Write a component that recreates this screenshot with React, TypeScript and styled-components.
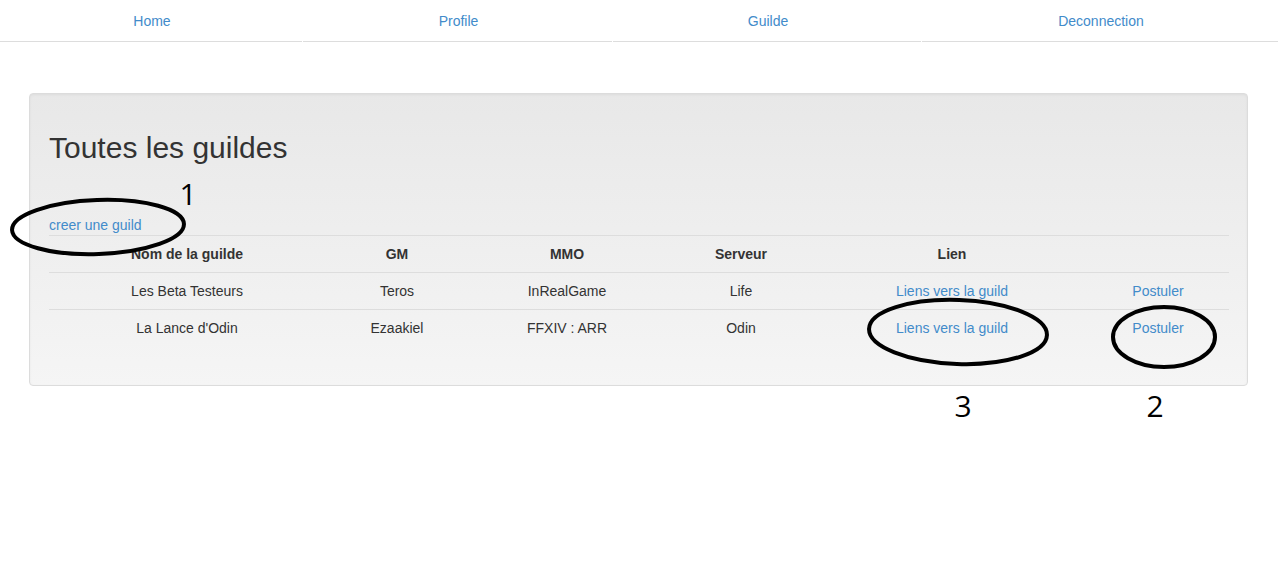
import * as React from "react";
import styled, { createGlobalStyle } from "styled-components";

const GlobalStyle = createGlobalStyle`
	html, body {
		margin: 0;
		padding: 0;
		background: #fff;
	}
	body {
		font-family: "Liberation Sans", Arial, sans-serif;
		font-size: 14px;
		line-height: 20px;
		color: #333;
	}
`;

const Page = styled.div`
	position: relative;
	width: 1280px;
	height: 578px;
	overflow: hidden;
`;

const Nav = styled.ul`
	display: grid;
	grid-template-columns: 303fr 310fr 309fr 356fr;
	margin: 0 2px 0 0;
	padding: 0;
	list-style: none;
`;

const NavItem = styled.li`
	margin-right: 1px;
	border-bottom: 1px solid #ddd;
	text-align: center;

	&:last-child {
		margin-right: 0;
	}
`;

const NavLink = styled.a`
	display: block;
	padding: 11px 14px 10px 16px;
	color: #428bca;
	text-decoration: none;
`;

const Well = styled.div`
	margin: 51px 32px 20px 29px;
	padding: 19px;
	min-height: 20px;
	border: 1px solid #dcdcdc;
	border-radius: 4px;
	background: linear-gradient(to bottom, #e8e8e8 0%, #f5f5f5 100%);
	box-shadow: inset 0 1px 3px rgba(0, 0, 0, 0.05), 0 1px 0 rgba(255, 255, 255, 0.1);
`;

const Title = styled.h2`
	margin: 18px 0 10px;
	font-size: 30px;
	font-weight: 500;
	line-height: 33px;
	color: #333;
`;

const CreateLink = styled.a`
	display: block;
	margin-top: 51px;
	color: #428bca;
	text-decoration: none;
`;

const Table = styled.table`
	width: 100%;
	border-collapse: collapse;
	border-spacing: 0;
	margin-bottom: 20px;
	table-layout: fixed;

	th, td {
		padding: 8px;
		border-top: 1px solid #ddd;
		text-align: center;
		vertical-align: top;
		line-height: 20px;
	}

	th {
		font-weight: bold;
	}
`;

const CellLink = styled.a`
	color: #428bca;
	text-decoration: none;
`;

const Marks = styled.svg`
	position: absolute;
	left: 0;
	top: 0;
	pointer-events: none;
`;

const MarkNumber = styled.text`
	font-family: "Open Sans", "Noto Sans", sans-serif;
	font-size: 30px;
	fill: #000;
`;

const columns = [276, 144, 196, 152, 270, 142];

const guilds = [
	{ name: "Les Beta Testeurs", gm: "Teros", mmo: "InRealGame", server: "Life" },
	{ name: "La Lance d'Odin", gm: "Ezaakiel", mmo: "FFXIV : ARR", server: "Odin" },
];

const App = () => {
	return (
		<>
			<GlobalStyle />
			<Page>
				<Nav>
					<NavItem><NavLink href="#">Home</NavLink></NavItem>
					<NavItem><NavLink href="#">Profile</NavLink></NavItem>
					<NavItem><NavLink href="#">Guilde</NavLink></NavItem>
					<NavItem><NavLink href="#">Deconnection</NavLink></NavItem>
				</Nav>

				<Well>
					<Title>Toutes les guildes</Title>
					<CreateLink href="#">creer une guild</CreateLink>
					<Table>
						<colgroup>
							{columns.map((w, i) => (
								<col key={i} style={{ width: w }} />
							))}
						</colgroup>
						<tbody>
							<tr>
								<th>Nom de la guilde</th>
								<th>GM</th>
								<th>MMO</th>
								<th>Serveur</th>
								<th>Lien</th>
								<th></th>
							</tr>
							{guilds.map((g) => (
								<tr key={g.name}>
									<td>{g.name}</td>
									<td>{g.gm}</td>
									<td>{g.mmo}</td>
									<td>{g.server}</td>
									<td><CellLink href="#">Liens vers la guild</CellLink></td>
									<td><CellLink href="#">Postuler</CellLink></td>
								</tr>
							))}
						</tbody>
					</Table>
				</Well>

				{/* hand-drawn annotations over the page */}
				<Marks width="1280" height="578" viewBox="0 0 1280 578">
					<g fill="none" stroke="#000" strokeWidth="4">
						<ellipse cx="98" cy="227" rx="86" ry="27" transform="rotate(-2 98 227)" />
						<ellipse cx="958" cy="332" rx="89" ry="32" transform="rotate(2 958 332)" />
						<ellipse cx="1164" cy="337" rx="51" ry="30" />
					</g>
					<MarkNumber x="188" y="205" textAnchor="middle">1</MarkNumber>
					<MarkNumber x="963" y="417" textAnchor="middle">3</MarkNumber>
					<MarkNumber x="1155" y="417" textAnchor="middle">2</MarkNumber>
				</Marks>
			</Page>
		</>
	);
};

export default App;
